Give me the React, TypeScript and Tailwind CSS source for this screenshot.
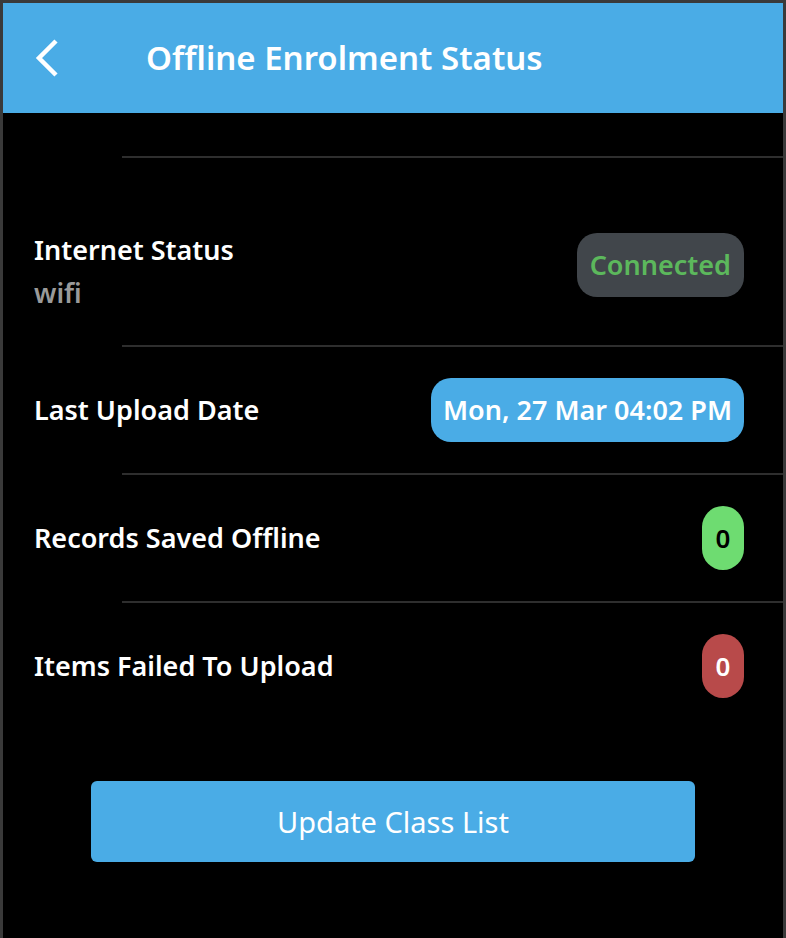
const font = { fontFamily: '"Noto Sans", "Open Sans", sans-serif' };

function Divider() {
  return <div className="ml-[119px] h-[2px] bg-[#2e2e2e]" />;
}

function Row({ label, children }: { label: string; children: React.ReactNode }) {
  return (
    <div className="flex items-center justify-between pl-[31px] pr-[39px] h-[126px]">
      <span className="text-[27px] font-semibold text-white">{label}</span>
      {children}
    </div>
  );
}

export default function App() {
  return (
    <div
      className="w-[786px] h-[938px] bg-black border-t-[3px] border-x-[3px] border-[#3a3a3a] flex flex-col overflow-hidden"
      style={font}
    >
      {/* header */}
      <div className="h-[110px] bg-[#4aace6] flex items-center shrink-0">
        <svg className="ml-[31px]" width="30" height="44" viewBox="0 0 30 44" fill="none">
          <polyline points="22,5 5,22 22,39" stroke="white" strokeWidth="4.5" strokeLinecap="butt" strokeLinejoin="miter" />
        </svg>
        <h1 className="ml-[82px] text-[33px] font-semibold text-white">Offline Enrolment Status</h1>
      </div>

      <div className="h-[43px]" />
      <Divider />

      <div className="flex items-start justify-between pl-[31px] pr-[39px] h-[187px] pt-[70px]">
        <div className="flex flex-col">
          <span className="text-[27px] font-semibold text-white leading-[43px]">Internet Status</span>
          <span className="text-[27px] font-semibold text-[#9a9a9a] leading-[43px]">wifi</span>
        </div>
        <span className="mt-[5px] h-[64px] px-[13px] rounded-[20px] bg-[#41464b] text-[#5cb85c] text-[27px] font-semibold flex items-center">
          Connected
        </span>
      </div>
      <Divider />

      <Row label="Last Upload Date">
        <span className="h-[64px] px-[12px] rounded-[20px] bg-[#4aace6] text-white text-[27px] font-semibold flex items-center">
          Mon, 27 Mar 04:02 PM
        </span>
      </Row>
      <Divider />

      <Row label="Records Saved Offline">
        <span className="h-[64px] w-[42px] rounded-full bg-[#6edc71] text-black text-[26px] font-semibold flex items-center justify-center">
          0
        </span>
      </Row>
      <Divider />

      <Row label="Items Failed To Upload">
        <span className="h-[64px] w-[42px] rounded-full bg-[#b84a4a] text-white text-[26px] font-semibold flex items-center justify-center">
          0
        </span>
      </Row>

      <div className="flex justify-center pt-[52px]">
        <button className="w-[604px] h-[81px] rounded-[6px] bg-[#4aace6] text-white text-[29px]">
          Update Class List
        </button>
      </div>
    </div>
  );
}
